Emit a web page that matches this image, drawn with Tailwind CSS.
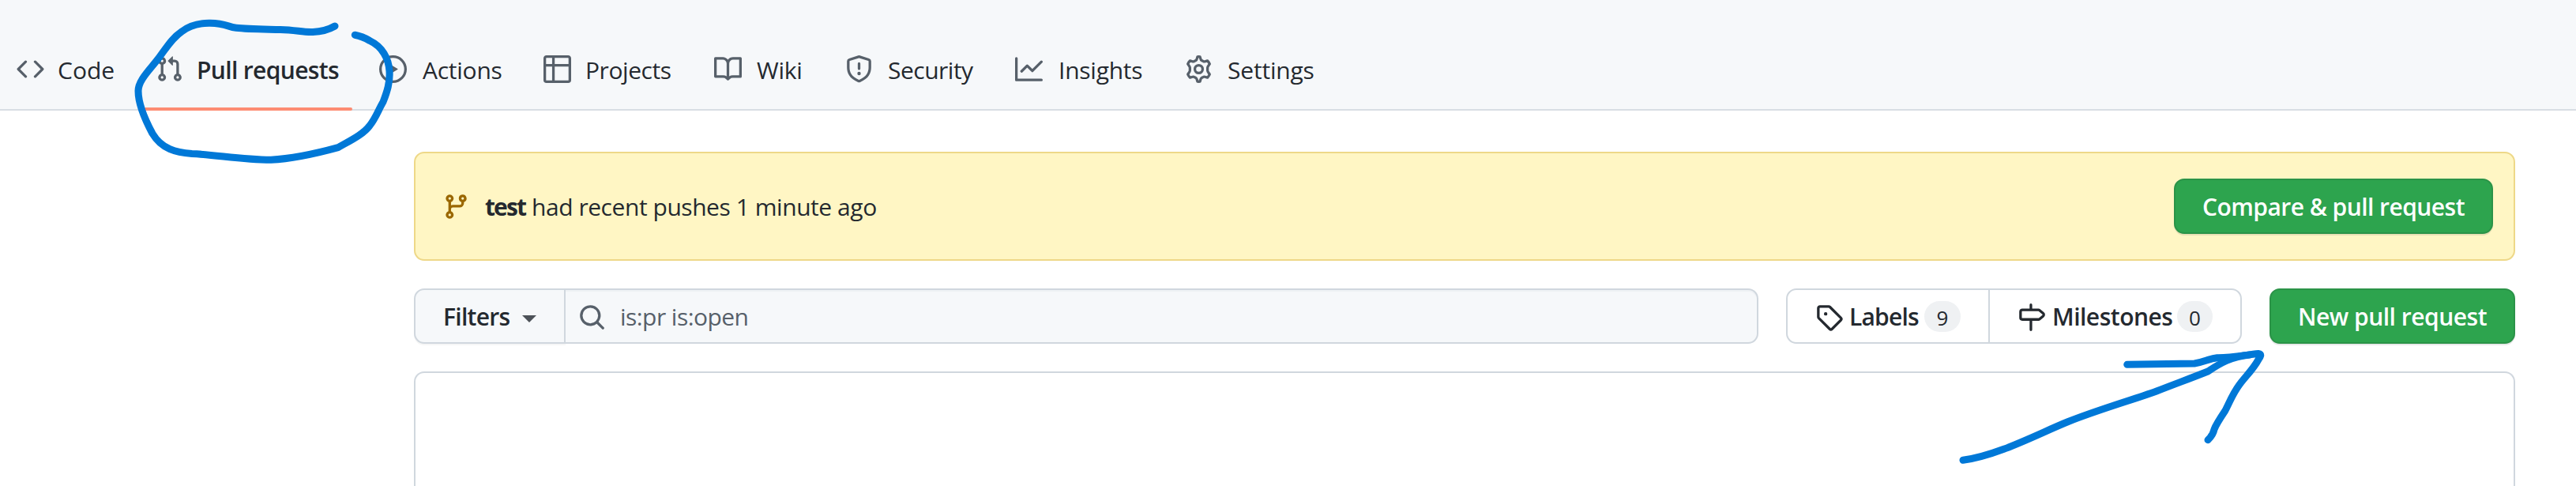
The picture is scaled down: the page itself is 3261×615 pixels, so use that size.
<!DOCTYPE html>
<html lang="en"><head><meta charset="utf-8"><title>Pull requests</title>
<script src="https://cdn.jsdelivr.net/npm/@tailwindcss/browser@4"></script></head>
<body class="relative h-[615px] w-[3261px] overflow-hidden bg-white font-['Open_Sans',sans-serif] text-[30px] leading-[40px] text-[#24292f]">
<header class="h-[140px] border-b-2 border-[#d8dee4] bg-[#f6f8fa] pt-[35px] pl-[21px]">
<nav class="flex h-[105px] items-center whitespace-nowrap">
<a class="flex w-[161px] items-center gap-[17px]"><svg class="size-[35px] shrink-0 fill-[#57606a]" viewBox="0 0 16 16"><path fill-rule="evenodd" d="M4.72 3.22a.75.75 0 011.06 1.06L2.06 8l3.72 3.72a.75.75 0 11-1.06 1.06L.47 8.53a.75.75 0 010-1.06l4.25-4.25zm6.56 0a.75.75 0 10-1.06 1.06L13.94 8l-3.72 3.72a.75.75 0 101.06 1.06l4.25-4.25a.75.75 0 000-1.06l-4.25-4.25z"/></svg><span class="mt-[2px]">Code</span></a>
<a class="relative mr-[34px] flex h-[105px] w-[264px] items-center gap-[17px] pl-[15px] font-semibold"><svg class="size-[35px] shrink-0 fill-[#57606a]" viewBox="0 0 16 16"><path fill-rule="evenodd" d="M7.177 3.073L9.573.677A.25.25 0 0110 .854v4.792a.25.25 0 01-.427.177L7.177 3.427a.25.25 0 010-.354zM3.75 2.5a.75.75 0 100 1.5.75.75 0 000-1.5zm-2.25.75a2.25 2.25 0 113 2.122v5.256a2.251 2.251 0 11-1.5 0V5.372A2.25 2.25 0 011.5 3.25zM11 2.5h-1V4h1a1 1 0 011 1v5.628a2.251 2.251 0 101.5 0V5A2.5 2.5 0 0011 2.5zm1 10.25a.75.75 0 111.5 0 .75.75 0 01-1.5 0zM3.75 12a.75.75 0 100 1.5.75.75 0 000-1.5z"/></svg><span class="mt-[2px] tracking-[-0.65px]">Pull requests</span><span class="absolute bottom-0 left-0 h-1 w-full rounded-full bg-[#fd8c73]"></span></a>
<a class="flex w-[208px] items-center gap-[20px]"><svg class="size-[35px] shrink-0 fill-[#57606a]" viewBox="0 0 16 16"><path fill-rule="evenodd" d="M1.5 8a6.5 6.5 0 1113 0 6.5 6.5 0 01-13 0zM8 0a8 8 0 100 16A8 8 0 008 0zM6.379 5.227A.25.25 0 006 5.442v5.117a.25.25 0 00.379.214l4.264-2.559a.25.25 0 000-.428L6.379 5.227z"/></svg><span class="mt-[2px] tracking-[-0.25px]">Actions</span></a>
<a class="flex w-[216px] items-center gap-[18px]"><svg class="size-[35px] shrink-0 fill-[#57606a]" viewBox="0 0 16 16"><path fill-rule="evenodd" d="M0 1.75C0 .784.784 0 1.75 0h12.5C15.216 0 16 .784 16 1.75v12.5A1.75 1.75 0 0114.25 16H1.75A1.75 1.75 0 010 14.25V1.75zM1.5 6.5v7.75c0 .138.112.25.25.25H5v-8H1.5zM5 5H1.5V1.75a.25.25 0 01.25-.25H5V5zm1.5 1.5v8h7.75a.25.25 0 00.25-.25V6.5h-8zm8-1.5h-8V1.5h7.75a.25.25 0 01.25.25V5z"/></svg><span class="mt-[2px] tracking-[-0.45px]">Projects</span></a>
<a class="flex w-[166px] items-center gap-[19px]"><svg class="size-[35px] shrink-0 fill-[#57606a]" viewBox="0 0 16 16"><path fill-rule="evenodd" d="M0 1.75A.75.75 0 01.75 1h4.253c1.227 0 2.317.59 3 1.501A3.744 3.744 0 0111.006 1h4.245a.75.75 0 01.75.75v10.5a.75.75 0 01-.75.75h-4.507a2.25 2.25 0 00-1.591.659l-.622.621a.75.75 0 01-1.06 0l-.622-.621A2.25 2.25 0 005.258 13H.75a.75.75 0 01-.75-.75V1.75zm8.755 3a2.25 2.25 0 012.25-2.25H14.5v9h-3.757c-.71 0-1.4.201-1.992.572l.004-7.322zm-1.504 7.324l.004-5.073-.002-2.253A2.25 2.25 0 005.003 2.5H1.5v9h3.757a3.75 3.75 0 011.994.574z"/></svg><span class="mt-[2px] tracking-[-0.25px]">Wiki</span></a>
<a class="flex w-[215px] items-center gap-[19px]"><svg class="size-[35px] shrink-0 fill-[#57606a]" viewBox="0 0 16 16"><path fill-rule="evenodd" d="M7.467.133a1.75 1.75 0 011.066 0l5.25 1.68A1.75 1.75 0 0115 3.48V7c0 1.566-.32 3.182-1.303 4.682-.983 1.498-2.585 2.813-5.032 3.855a1.7 1.7 0 01-1.33 0c-2.447-1.042-4.049-2.357-5.032-3.855C1.32 10.182 1 8.566 1 7V3.48a1.75 1.75 0 011.217-1.667l5.25-1.68zm.61 1.429a.25.25 0 00-.153 0l-5.25 1.68a.25.25 0 00-.174.238V7c0 1.358.275 2.666 1.057 3.86.784 1.194 2.121 2.34 4.366 3.297a.2.2 0 00.154 0c2.245-.956 3.582-2.104 4.366-3.298C13.225 9.666 13.5 8.36 13.5 7V3.48a.25.25 0 00-.174-.237l-5.25-1.68zM9 10.5a1 1 0 11-2 0 1 1 0 012 0zm-.25-5.75a.75.75 0 10-1.5 0v3a.75.75 0 001.5 0v-3z"/></svg><span class="mt-[2px] tracking-[-0.5px]">Security</span></a>
<a class="flex w-[215px] items-center gap-[20px]"><svg class="size-[35px] shrink-0 fill-[#57606a]" viewBox="0 0 16 16"><path fill-rule="evenodd" d="M1.5 1.75a.75.75 0 00-1.5 0v12.5c0 .414.336.75.75.75h14.5a.75.75 0 000-1.5H1.5V1.75zm14.28 2.53a.75.75 0 00-1.06-1.06L10 7.94 7.53 5.47a.75.75 0 00-1.06 0L3.22 8.72a.75.75 0 001.06 1.06L7 7.06l2.47 2.47a.75.75 0 001.06 0l5.25-5.25z"/></svg><span class="mt-[2px] tracking-[-0.25px]">Insights</span></a>
<a class="flex items-center gap-[19px]"><svg class="size-[35px] shrink-0 fill-none stroke-[#57606a]" stroke-width="1.5" stroke-linejoin="round" viewBox="0 0 16 16"><circle cx="8" cy="8" r="2.25"/><path d="M7.3.8Q8 .7 8.7.8C9.1 1.9 9 2.6 9.7 2.95L10.7 3.5C11.3 3.9 12 3.3 13 3.1Q13.8 3.9 14.3 5C13.8 5.9 13 6.5 13.1 7.3V8.7C13 9.5 13.8 10.1 14.3 11Q13.8 12.1 13 12.9C12 12.7 11.3 12.1 10.7 12.5L9.7 13.05C9 13.4 9.1 14.1 8.7 15.2Q8 15.3 7.3 15.2C6.9 14.1 7 13.4 6.3 13.05L5.3 12.5C4.7 12.1 4 12.7 3 12.9Q2.2 12.1 1.7 11C2.2 10.1 3 9.5 2.9 8.7V7.3C3 6.5 2.2 5.9 1.7 5Q2.2 3.9 3 3.1C4 3.3 4.7 3.9 5.3 3.5L6.3 2.95C7 2.6 6.9 1.9 7.3.8Z"/></svg><span class="mt-[2px] tracking-[-0.2px]">Settings</span></a>
</nav></header>
<main class="ml-[524px] w-[2660px] pt-[52px] whitespace-nowrap">
<section class="flex h-[138px] items-center rounded-[13px] border-2 border-[#eed888] bg-[#fff6c4] pr-[26px] pl-[34px]">
<svg class="mr-[19px] size-[35px] shrink-0 fill-[#9a6700]" viewBox="0 0 16 16"><path fill-rule="evenodd" d="M11.75 2.5a.75.75 0 100 1.5.75.75 0 000-1.5zm-2.25.75a2.25 2.25 0 113 2.122V6A2.5 2.5 0 0110 8.5H6a1 1 0 00-1 1v1.128a2.251 2.251 0 11-1.5 0V5.372a2.25 2.25 0 111.5 0v1.836A2.492 2.492 0 016 7h4a1 1 0 001-1v-.628A2.25 2.25 0 019.5 3.25zM4.25 12a.75.75 0 100 1.5.75.75 0 000-1.5zM3.5 3.25a.75.75 0 111.5 0 .75.75 0 01-1.5 0z"/></svg>
<p class="mt-[2px] flex tracking-[-0.45px]"><b class="w-[59px] font-bold tracking-[-1.9px]">test</b><span>had recent pushes 1 minute ago</span></p>
<button class="ml-auto flex h-[70px] w-[404px] items-center justify-center rounded-[13px] border-2 border-[#2b9348] bg-[#2da44e] font-semibold text-white shadow-[0_2px_0_rgba(27,31,36,0.1)]"><span class="mt-[2px] tracking-[-0.55px]">Compare &amp; pull request</span></button>
</section>
<div class="mt-[35px] flex h-[70px]">
<button class="flex w-[192px] items-center rounded-l-[13px] border-2 border-[#d0d7de] bg-[#f6f8fa] pl-[35px] font-semibold shadow-[0_2px_0_rgba(27,31,36,0.04)]"><span class="mt-[2px] tracking-[-0.7px]">Filters</span><i class="ml-auto mt-[7px] mr-[35px] border-x-[9px] border-t-[9px] border-x-transparent border-t-[#4d5258]"></i></button>
<div class="flex w-[1510px] items-center rounded-r-[13px] border-2 border-l-0 border-[#d0d7de] bg-[#f6f8fa] pl-[16px] text-[#57606a] shadow-[inset_0_2px_0_rgba(208,215,222,0.2)]"><svg class="mr-[18px] mt-[2px] size-[35px] shrink-0 fill-[#57606a]" viewBox="0 0 16 16"><path fill-rule="evenodd" d="M11.5 7a4.499 4.499 0 11-8.998 0A4.499 4.499 0 0111.5 7zm-.82 4.74a6 6 0 111.06-1.06l3.04 3.04a.75.75 0 11-1.06 1.06l-3.04-3.04z"/></svg><span class="mt-[2px] tracking-[-0.55px]">is:pr is:open</span></div>
<div class="ml-[35px] flex w-[577px] rounded-[13px] border-2 border-[#d0d7de] font-semibold">
<a class="flex w-[256px] items-center border-r-2 border-[#d0d7de] pl-[35px]"><svg class="mr-[8px] mt-[2px] size-[35px] shrink-0" viewBox="0 0 16 16"><path fill-rule="evenodd" fill="#24292f" d="M2.5 7.775V2.75a.25.25 0 01.25-.25h5.025a.25.25 0 01.177.073l6.25 6.25a.25.25 0 010 .354l-5.025 5.025a.25.25 0 01-.354 0l-6.25-6.25a.25.25 0 01-.073-.177zm-1.5 0V2.75C1 1.784 1.784 1 2.75 1h5.025c.464 0 .91.184 1.238.513l6.25 6.25a1.75 1.75 0 010 2.474l-5.026 5.026a1.75 1.75 0 01-2.474 0l-6.25-6.25A1.75 1.75 0 011 7.775zM6 5a1 1 0 100 2 1 1 0 000-2z"/></svg><span class="mt-[2px] tracking-[-0.8px]">Labels</span><span class="ml-auto mr-[35px] flex h-[39px] w-[46px] items-center justify-center rounded-full bg-[#eff1f3] pt-[3px] text-[26px] font-medium">9</span></a>
<a class="flex flex-1 items-center pl-[35px]"><svg class="mr-[9px] mt-[2px] size-[35px] shrink-0" viewBox="0 0 16 16"><path fill-rule="evenodd" fill="#24292f" d="M7.75 0a.75.75 0 01.75.75V3h3.634c.414 0 .814.147 1.13.414l2.07 1.75a1.75 1.75 0 010 2.672l-2.07 1.75a1.75 1.75 0 01-1.13.414H8.5v5.25a.75.75 0 11-1.5 0V10H2.75A1.75 1.75 0 011 8.25v-3.5C1 3.784 1.784 3 2.75 3H7V.75A.75.75 0 017.75 0zm0 8.5h4.384a.25.25 0 00.161-.06l2.07-1.75a.25.25 0 000-.38l-2.07-1.75a.25.25 0 00-.161-.06H2.75a.25.25 0 00-.25.25v3.5c0 .138.112.25.25.25h5z"/></svg><span class="mt-[2px] tracking-[-0.5px]">Milestones</span><span class="ml-auto mr-[35px] flex h-[39px] w-[45px] items-center justify-center rounded-full bg-[#eff1f3] pt-[3px] text-[26px] font-medium">0</span></a>
</div>
<button class="ml-[35px] flex w-[311px] items-center justify-center rounded-[13px] border-2 border-[#2b9348] bg-[#2da44e] font-semibold text-white shadow-[0_2px_0_rgba(27,31,36,0.1)]"><span class="mt-[2px] tracking-[-0.5px]">New pull request</span></button>
</div>
<section class="mt-[35px] h-[145px] rounded-t-[13px] border-2 border-b-0 border-[#d0d7de]"></section>
</main>
<svg class="pointer-events-none absolute inset-0 h-[615px] w-[3261px]" viewBox="0 0 3261 615" fill="none" stroke="#0078d7" stroke-width="9" stroke-linecap="round" stroke-linejoin="round">
<path d="M424 33C417 37 410 40 396 40.500C383 41 375 38 355 37.500C337 37 314 37 299 35.300C288 34 286 29.500 266 29.300C251 29 239 33 230 40C218 48 211 60 202 72C191 87 175 101 175 115C175 133 186 156 193 169C205 189 223 193 243 194.500C275 196 305 202 343 202.300C370 201 405 193 428 186.700C443 178 460 170 468 159C476 149 479 139 485 129C490 116 494 104 493 90C492 74 484 59 468 51.500C462 48 456 45.500 449.300 44.300"/>
<path d="M2485 582.300C2530 576 2580 549 2617 534C2660 517 2700 506 2730 495C2753 486 2775 478 2795 470C2810 460 2825 451 2848 449"/>
<path d="M2692.700 461.300L2778 460C2791 458 2796 454 2806.700 452.700C2825 453 2843 449 2859 447.500C2864 448 2861 452 2859 455C2852 468 2841 478 2835 486.700C2826 499 2822 510 2816.700 520C2812 527 2805 538 2803 543.300C2802 549 2800 552 2795 556.700"/>
</svg>
</body></html>
